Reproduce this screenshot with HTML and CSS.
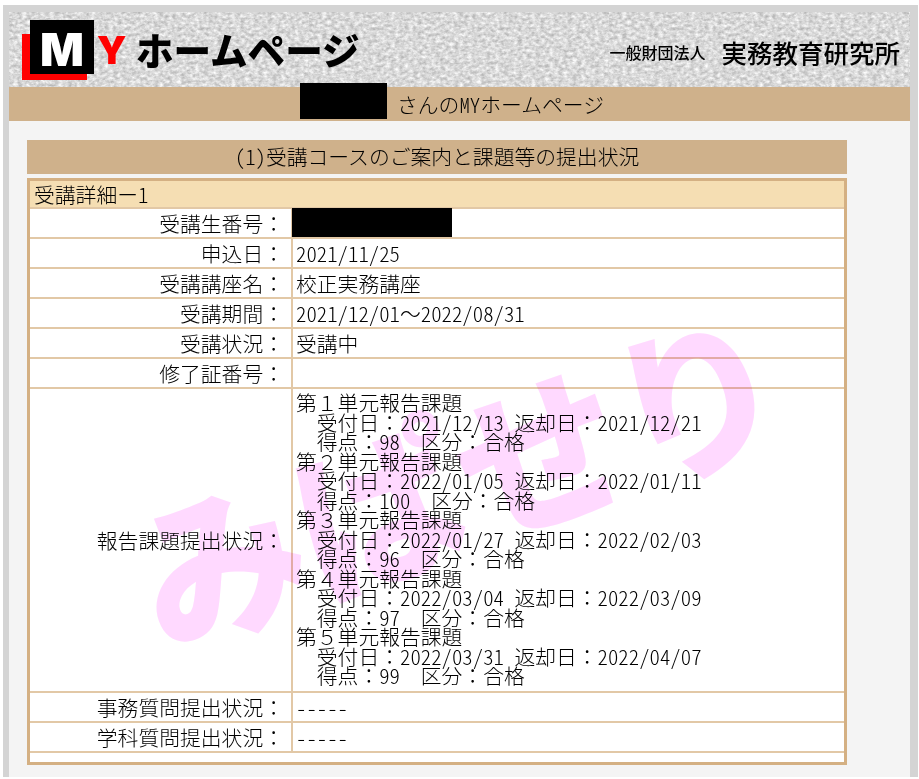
FILE: index.html
```html
<!DOCTYPE html>
<html lang="ja">
<head>
    <meta charset="UTF-8">
    <title>MYホームページ</title>
    <link rel="stylesheet" href="styles.css">
</head>
<body>
    <div class="frame">
        <div class="header">
            <div class="logo">
                <div class="logoRed"></div>
                <div class="logoBox">M</div>
            </div>
            <div class="logoY">Y</div>
            <div class="logoText">ホームページ</div>
            <div class="orgType">一般財団法人</div>
            <div class="orgName">実務教育研究所</div>
        </div>
        <div class="userBar">
            <div class="redactName"></div>
            <div>さんの<span class="hw">MY</span>ホームページ</div>
        </div>
        <div class="panel">
            <div class="sectionTitle"><span class="hw">(1)</span>受講コースのご案内と課題等の提出状況</div>
            <table class="detail">
                <colgroup>
                    <col class="labelCol">
                    <col>
                </colgroup>
                <tr class="detailHead"><td colspan="2">受講詳細ー<span class="hw">1</span></td></tr>
                <tr>
                    <td class="label">受講生番号：</td>
                    <td class="value"><div class="redactNumber"></div></td>
                </tr>
                <tr><td class="label">申込日：</td><td class="value hw">2021/11/25</td></tr>
                <tr><td class="label">受講講座名：</td><td class="value">校正実務講座</td></tr>
                <tr><td class="label">受講期間：</td><td class="value"><span class="hw">2021/12/01</span>～<span class="hw">2022/08/31</span></td></tr>
                <tr><td class="label">受講状況：</td><td class="value">受講中</td></tr>
                <tr><td class="label">修了証番号：</td><td class="value"></td></tr>
                <tr>
                    <td class="label">報告課題提出状況：</td>
                    <td class="value report">
                        <div>第１単元報告課題</div>
                        <div class="indent">受付日：<span class="hw">2021/12/13 </span>返却日：<span class="hw">2021/12/21</span></div>
                        <div class="indent">得点：<span class="hw">98  </span>区分：合格</div>
                        <div>第２単元報告課題</div>
                        <div class="indent">受付日：<span class="hw">2022/01/05 </span>返却日：<span class="hw">2022/01/11</span></div>
                        <div class="indent">得点：<span class="hw">100  </span>区分：合格</div>
                        <div>第３単元報告課題</div>
                        <div class="indent">受付日：<span class="hw">2022/01/27 </span>返却日：<span class="hw">2022/02/03</span></div>
                        <div class="indent">得点：<span class="hw">96  </span>区分：合格</div>
                        <div>第４単元報告課題</div>
                        <div class="indent">受付日：<span class="hw">2022/03/04 </span>返却日：<span class="hw">2022/03/09</span></div>
                        <div class="indent">得点：<span class="hw">97  </span>区分：合格</div>
                        <div>第５単元報告課題</div>
                        <div class="indent">受付日：<span class="hw">2022/03/31 </span>返却日：<span class="hw">2022/04/07</span></div>
                        <div class="indent">得点：<span class="hw">99  </span>区分：合格</div>
                    </td>
                </tr>
                <tr><td class="label">事務質問提出状況：</td><td class="value hw">-----</td></tr>
                <tr><td class="label">学科質問提出状況：</td><td class="value hw">-----</td></tr>
                <tr class="detailEnd"><td colspan="2"></td></tr>
            </table>
        </div>
        <div class="watermark">みぱせり</div>
    </div>
</body>
</html>
```

FILE: styles.css
```css
body {
  margin: 0;
  background: #ffffff;
  color: #000000;
  font-family: "Noto Sans CJK JP", sans-serif;
  font-weight: 300;
  font-size: 20.8px;
}

/* Latin and digits at half the width of a kanji */
.hw {
  font-feature-settings: "hwid";
}

/* Gray frame round the page */
.frame {
  position: relative;
  width: 901px;
  margin: 5px 0 0 3px;
  border: solid #d4d4d4;
  border-width: 7px 8px 0 6px;
  overflow: hidden;
}

/* Header */
.header {
  display: flex;
  align-items: center;
  height: 75px;
  padding-left: 13px;
  box-sizing: border-box;
  background-color: #dcdcdc;
  background-image: url("data:image/svg+xml,%3Csvg xmlns='http://www.w3.org/2000/svg' width='300' height='150'%3E%3Cfilter id='n' color-interpolation-filters='sRGB'%3E%3CfeTurbulence type='fractalNoise' baseFrequency='0.22 0.32' numOctaves='3' seed='4'/%3E%3CfeColorMatrix values='0.4 0 0 0 0.65 0.4 0 0 0 0.65 0.4 0 0 0 0.65 0 0 0 0 1'/%3E%3C/filter%3E%3Crect width='300' height='150' filter='url(%23n)'/%3E%3C/svg%3E");
}

.logo {
  position: relative;
  width: 72px;
  height: 60px;
}

.logoRed {
  position: absolute;
  left: 0;
  top: 14px;
  width: 65px;
  height: 46px;
  background: #ff0000;
}

.logoBox {
  position: absolute;
  left: 8px;
  top: 0;
  width: 64px;
  height: 54px;
  background: #000000;
  color: #ffffff;
  font-family: Inter, sans-serif;
  font-weight: 900;
  font-size: 46px;
  line-height: 58px;
  text-align: center;
}

.logoY {
  width: 39px;
  margin-left: 3px;
  margin-top: 1px;
  color: #ff0000;
  font-family: Inter, sans-serif;
  font-weight: 900;
  font-size: 38px;
}

.logoText {
  font-weight: 900;
  font-size: 37.6px;
  margin-top: -2px;
}

.orgType {
  margin-left: auto;
  margin-top: 4px;
  font-size: 16px;
  font-weight: 500;
}

.orgName {
  margin-left: 16px;
  margin-right: 10px;
  margin-top: 4px;
  font-size: 25.5px;
  font-weight: 500;
}

/* Bars */
.userBar {
  display: flex;
  align-items: center;
  gap: 10px;
  height: 34px;
  padding-left: 291px;
  background: #cfb18b;
}

.redactName {
  width: 87px;
  height: 36px;
  margin-top: -6px;
  background: #000000;
}

.panel {
  padding: 19px 63px 12px 18px;
  background: #f4f4f4;
}

.sectionTitle {
  height: 34px;
  line-height: 33px;
  text-align: center;
  background: #cfb18b;
}

/* Detail table */
.detail {
  width: 820px;
  margin-top: 4px;
  table-layout: fixed;
  border-collapse: separate;
  border-spacing: 0;
  border: 3px solid #d4b083;
  background: #ffffff;
}

.labelCol {
  width: 261px;
}

.detail td {
  padding: 0;
  border-bottom: 2px solid #e2c8a6;
  line-height: 24px;
}

.detail tr {
  height: 30px;
}

.detail .detailHead {
  height: 28px;
}

.detailHead td {
  padding-left: 4px;
  background: #f5deb3;
}

.detail .detailEnd {
  height: 9px;
}

.detail .detailEnd td {
  border-bottom: 0;
  line-height: 0;
}

.detail .label {
  padding-right: 7px;
  text-align: right;
}

.detail .value {
  padding-left: 3px;
  border-left: 2px solid #e2c8a6;
}

.detail .report {
  padding-top: 4px;
  padding-bottom: 5px;
}

.report div {
  line-height: 19.53px;
  white-space: pre;
}

.report .indent {
  padding-left: 20.8px;
}

.redactNumber {
  width: 160px;
  height: 29px;
  margin: -1px 0 0 -4px;
  background: #000000;
}

/* Pink text stamped over the table */
.watermark {
  position: absolute;
  left: 112px;
  top: 378px;
  color: #ffd9ff;
  font-weight: 900;
  font-size: 168px;
  line-height: 1;
  white-space: nowrap;
  transform: rotate(-19deg);
  mix-blend-mode: multiply;
}
```
